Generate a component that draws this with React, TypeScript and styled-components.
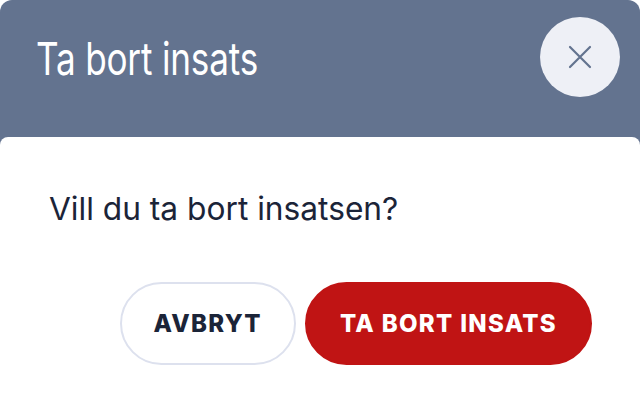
import React from 'react'
import styled, { createGlobalStyle } from 'styled-components'

const GlobalStyle = createGlobalStyle`
  html, body {
    margin: 0;
    padding: 0;
    background: #ffffff;
  }
  body {
    font-family: Inter, 'Noto Sans', sans-serif;
    -webkit-font-smoothing: antialiased;
  }
`

const Dialog = styled.div`
  display: flex;
  flex-direction: column;
  min-height: 100vh;
  background: #63738f;
  border-radius: 12px 12px 0 0;
`

const Header = styled.header`
  display: flex;
  align-items: flex-start;
  justify-content: space-between;
  height: 137px;
  box-sizing: border-box;
  padding: 17px 20px 0 36px;
`

const Title = styled.h1`
  margin: 14px 0 0;
  font-size: 45px;
  font-weight: 400;
  line-height: 56px;
  letter-spacing: -0.005em;
  color: #ffffff;
  transform: scaleX(0.78);
  transform-origin: left center;
  white-space: nowrap;
`

const CloseButton = styled.button`
  display: flex;
  align-items: center;
  justify-content: center;
  flex: none;
  width: 80px;
  height: 80px;
  padding: 0;
  border: none;
  border-radius: 50%;
  background: #eef0f6;
  color: #63738f;
  cursor: pointer;
`

const Body = styled.section`
  flex: 1;
  display: flex;
  flex-direction: column;
  padding: 53px 48px 0 49px;
  background: #ffffff;
  border-radius: 8px 8px 0 0;
`

const Message = styled.p`
  margin: 0;
  font-size: 31.7px;
  line-height: 38px;
  color: #1b2438;
`

const Actions = styled.div`
  display: flex;
  justify-content: flex-end;
  gap: 9px;
  margin-top: 54px;
`

const Button = styled.button<{ $danger?: boolean }>`
  height: 83px;
  padding: 0 ${p => (p.$danger ? 33 : 32)}px;
  border-radius: 42px;
  border: 2px solid ${p => (p.$danger ? '#c01414' : '#dde1ee')};
  background: ${p => (p.$danger ? '#c01414' : '#ffffff')};
  color: ${p => (p.$danger ? '#ffffff' : '#1b2438')};
  font-family: Inter, 'Noto Sans', sans-serif;
  font-size: 24px;
  font-weight: 800;
  letter-spacing: 0.055em;
  text-transform: uppercase;
  cursor: pointer;
`

const CloseIcon = () => (
  <svg width="24" height="24" viewBox="0 0 24 24" fill="none" stroke="currentColor" strokeWidth="2.2" strokeLinecap="round">
    <path d="M2 2 L22 22 M22 2 L2 22" />
  </svg>
)

const App: React.FunctionComponent = () => {
  return <>
    <GlobalStyle/>
    <Dialog>
      <Header>
        <Title>Ta bort insats</Title>
        <CloseButton aria-label="Stäng"><CloseIcon/></CloseButton>
      </Header>
      <Body>
        <Message>Vill du ta bort insatsen?</Message>
        <Actions>
          <Button>Avbryt</Button>
          <Button $danger>Ta bort insats</Button>
        </Actions>
      </Body>
    </Dialog>
  </>
}

export default App
